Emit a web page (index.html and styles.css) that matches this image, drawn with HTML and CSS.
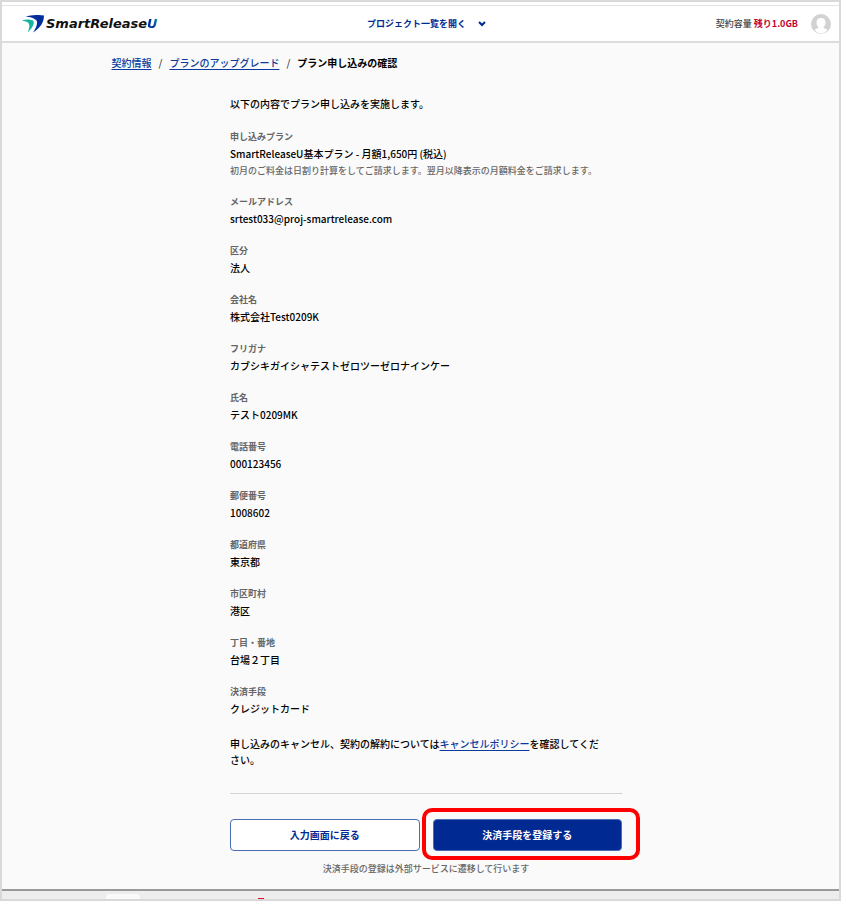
FILE: index.html
```html
<!DOCTYPE html>
<html lang="ja">
<head>
    <meta charset="UTF-8">
    <meta name="viewport" content="width=device-width, initial-scale=1.0">
    <title>プラン申し込みの確認</title>
    <link rel="stylesheet" href="styles.css">
</head>
<body>
    <div class="window">
        <div class="top-strip"></div>

        <!-- Header -->
        <header class="header">
            <a href="#" class="logo">
                <svg class="logo-mark" viewBox="0 0 44 36" aria-hidden="true">
                    <path d="M7 3 C18 0 32 -1 44 1 C44 14 37 26 22 35 C29 25 32 16 29 11 C25 6 16 4 7 3 Z" fill="#002f9c"/>
                    <path d="M0 11 C9 8 18 9 23 12 C25 19 20 27 11 35 C15 27 16 20 13 16 C10 13 5 12 0 11 Z" fill="#12b5a0"/>
                </svg>
                <span class="logo-text">SmartRelease<span class="logo-u">U</span></span>
            </a>
            <button type="button" class="project-button">
                プロジェクト一覧を開く
                <svg class="chevron" viewBox="0 0 8 6" aria-hidden="true">
                    <path d="M1 1 L4 4 L7 1" fill="none" stroke="#002a91" stroke-width="2"/>
                </svg>
            </button>
            <div class="account">
                <span class="capacity">契約容量 <strong>残り1.0GB</strong></span>
                <svg class="avatar" viewBox="0 0 20 20" aria-hidden="true">
                    <circle cx="10" cy="10" r="10" fill="#d2d2d2"/>
                    <path d="M10 4 C13 4 14.500 6 14.500 8.500 C14.500 10.500 13.500 12 12.500 13 C12.500 14.500 15 14.500 16.500 16 C14.500 18.500 12 19.500 10 19.500 C8 19.500 5.500 18.500 3.500 16 C5 14.500 7.500 14.500 7.500 13 C6.500 12 5.500 10.500 5.500 8.500 C5.500 6 7 4 10 4 Z" fill="#fff"/>
                </svg>
            </div>
        </header>

        <main class="main">
            <nav class="breadcrumb">
                <a href="#">契約情報</a>
                <span class="slash">/</span>
                <a href="#">プランのアップグレード</a>
                <span class="slash">/</span>
                <strong>プラン申し込みの確認</strong>
            </nav>

            <!-- Confirmation -->
            <section class="confirm">
                <p class="lead">以下の内容でプラン申し込みを実施します。</p>

                <dl class="details">
                    <div class="item">
                        <dt>申し込みプラン</dt>
                        <dd>SmartReleaseU基本プラン - 月額1,650円 (税込)</dd>
                        <dd class="note">初月のご料金は日割り計算をしてご請求します。翌月以降表示の月額料金をご請求します。</dd>
                    </div>
                    <div class="item">
                        <dt>メールアドレス</dt>
                        <dd>srtest033@proj-smartrelease.com</dd>
                    </div>
                    <div class="item">
                        <dt>区分</dt>
                        <dd>法人</dd>
                    </div>
                    <div class="item">
                        <dt>会社名</dt>
                        <dd>株式会社Test0209K</dd>
                    </div>
                    <div class="item">
                        <dt>フリガナ</dt>
                        <dd>カブシキガイシャテストゼロツーゼロナインケー</dd>
                    </div>
                    <div class="item">
                        <dt>氏名</dt>
                        <dd>テスト0209MK</dd>
                    </div>
                    <div class="item">
                        <dt>電話番号</dt>
                        <dd>000123456</dd>
                    </div>
                    <div class="item">
                        <dt>郵便番号</dt>
                        <dd>1008602</dd>
                    </div>
                    <div class="item">
                        <dt>都道府県</dt>
                        <dd>東京都</dd>
                    </div>
                    <div class="item">
                        <dt>市区町村</dt>
                        <dd>港区</dd>
                    </div>
                    <div class="item">
                        <dt>丁目・番地</dt>
                        <dd>台場２丁目</dd>
                    </div>
                    <div class="item">
                        <dt>決済手段</dt>
                        <dd>クレジットカード</dd>
                    </div>
                </dl>

                <p class="policy">申し込みのキャンセル、契約の解約については<a href="#">キャンセルポリシー</a>を確認してくだ<br>さい。</p>

                <div class="actions">
                    <button type="button" class="button">入力画面に戻る</button>
                    <div class="highlight">
                        <button type="button" class="button primary">決済手段を登録する</button>
                    </div>
                </div>
                <p class="caption">決済手段の登録は外部サービスに遷移して行います</p>
            </section>
        </main>

        <!-- Bottom bar -->
        <footer class="taskbar">
            <span class="tab"></span>
            <span class="dot"></span>
        </footer>
    </div>
</body>
</html>
```
FILE: styles.css
```css
* {
    box-sizing: border-box;
}

body {
    margin: 0;
    font-family: "Noto Sans CJK JP", sans-serif;
    font-size: 10px;
    font-weight: 500;
    line-height: 16px;
    color: #000;
    background: #fafafa;
}

p, dl, dd {
    margin: 0;
}

a {
    color: #0b3a9c;
    text-underline-offset: 2px;
}

.window {
    display: flex;
    flex-direction: column;
    min-height: 100vh;
    border: 2px solid #d9d9d9;
}

.top-strip {
    height: 4px;
    background: #fff;
    border-bottom: 1px solid #e2e2e2;
}

.header {
    display: grid;
    grid-template-columns: 1fr auto 1fr;
    align-items: center;
    height: 37px;
    padding: 0 8px 0 20px;
    background: #fff;
    border-bottom: 2px solid #dcdcdc;
}

.logo {
    display: flex;
    align-items: center;
    gap: 2px;
    text-decoration: none;
}

.logo-mark {
    width: 22px;
    height: 18px;
}

.logo-text {
    font-family: "DejaVu Sans", sans-serif;
    font-size: 13px;
    font-weight: bold;
    font-style: italic;
    color: #111;
}

.logo-u {
    color: transparent;
    background: linear-gradient(to right, #002f9c 60%, #12b5a0);
    background-clip: text;
    -webkit-background-clip: text;
}

.project-button {
    display: flex;
    align-items: center;
    gap: 12px;
    padding: 0;
    border: none;
    background: none;
    font-family: inherit;
    font-size: 9px;
    font-weight: bold;
    color: #002a91;
    cursor: pointer;
}

.chevron {
    width: 8px;
    height: 6px;
}

.account {
    display: flex;
    justify-content: flex-end;
    align-items: center;
    gap: 13px;
}

.capacity {
    font-size: 9px;
    color: #444;
}

.capacity strong {
    color: #c4002f;
}

.avatar {
    width: 20px;
    height: 20px;
}

.main {
    flex: 1;
    width: 100%;
    max-width: 640px;
    margin: 0 auto;
    padding: 12px 0 12px 11px;
}

.breadcrumb {
    display: flex;
    gap: 7px;
}

.slash {
    color: #444;
}

.confirm {
    max-width: 392px;
    margin: 25px auto 0;
}

.details {
    display: flex;
    flex-direction: column;
    gap: 15px;
    margin-top: 17px;
}

.item dt {
    font-size: 9px;
    font-weight: bold;
    color: #666;
}

.item dd {
    line-height: 18px;
}

.item .note {
    font-size: 9px;
    line-height: 16px;
    color: #666;
}

.policy {
    margin-top: 18px;
    padding-bottom: 25px;
    border-bottom: 1px solid #d4d4d4;
}

.actions {
    display: grid;
    grid-template-columns: 1fr 1fr;
    gap: 13px;
    margin-top: 25px;
}

.button {
    width: 100%;
    height: 32px;
    padding: 0 0 2px;
    border: 1px solid #4a6bb5;
    border-radius: 4px;
    background: #fff;
    font-family: inherit;
    font-size: 10px;
    font-weight: bold;
    color: #002a91;
    cursor: pointer;
}

.primary {
    background: #002a91;
    color: #fff;
}

.highlight {
    position: relative;
}

/* red frame around the main action */
.highlight::after {
    content: "";
    position: absolute;
    inset: -11px -18px -9px -11px;
    border: 4px solid #f00;
    border-radius: 10px;
    pointer-events: none;
}

.caption {
    margin-top: 10px;
    font-size: 9px;
    color: #666;
    text-align: center;
}

.taskbar {
    display: flex;
    align-items: flex-end;
    gap: 118px;
    height: 10px;
    padding-left: 104px;
    border-top: 2px solid #999;
    background: #ededed;
}

.tab {
    width: 34px;
    height: 5px;
    border-radius: 4px 4px 0 0;
    background: #fafafa;
}

.dot {
    width: 6px;
    height: 1px;
    background: #e0102a;
}
```
